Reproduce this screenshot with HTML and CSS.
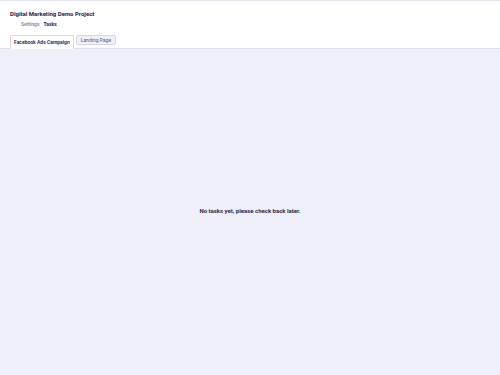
FILE: index.html
```html
<!DOCTYPE html>
<html lang="en">
<head>
  <meta charset="UTF-8">
  <title>Digital Marketing Demo Project</title>
  <link rel="stylesheet" href="styles.css">
</head>
<body>
  <header class="project-header">
    <h1 class="project-title">Digital Marketing Demo Project</h1>
    <nav class="project-nav">
      <a href="#">Settings</a>
      <a href="#" class="active">Tasks</a>
    </nav>
    <div class="tabs">
      <a href="#" class="tab active">Facebook Ads Campaign</a>
      <a href="#" class="tab">Landing Page</a>
    </div>
  </header>

  <main class="task-area">
    <p class="empty">No tasks yet, please check back later.</p>
  </main>
</body>
</html>
```

FILE: styles.css
```css
html, body {
  height: 100%;
}

body {
  margin: 0;
  font-family: Roboto, "Liberation Sans", sans-serif;
  background-color: #f0f0fa;
  color: #1e1b4b;
  display: flex;
  flex-direction: column;
}

.project-header {
  background-color: white;
  border-top: 1px solid #e4e4ef;
  border-bottom: 1px solid #dcdcea;
  padding: 9px 10px 0;
}

.project-title {
  margin: 0;
  font-size: 6px;
  font-weight: 700;
  line-height: 8px;
}

.project-nav {
  display: flex;
  gap: 4px;
  padding-left: 11px;
  margin-top: 2px;
}

.project-nav a {
  font-size: 5px;
  line-height: 8px;
  color: #7c7c95;
  text-decoration: none;
  font-weight: 500;
}

.project-nav a.active {
  color: #1e1b4b;
  font-weight: 700;
}

/* Tabs */
.tabs {
  display: flex;
  align-items: flex-start;
  gap: 2px;
  margin-top: 7px;
  margin-bottom: -1px;
}

.tab {
  font-size: 5px;
  line-height: 6px;
  padding: 1px 4px;
  border: 1px solid #d6d6e6;
  border-radius: 2px;
  background-color: #f0f0fa;
  color: #5c5c7a;
  text-decoration: none;
}

.tab.active {
  background-color: white;
  color: #1e1b4b;
  font-weight: 600;
  padding: 3px 3px 3px;
  border-bottom-color: white;
  border-radius: 2px 2px 0 0;
}

.task-area {
  flex: 1;
  display: flex;
  align-items: center;
  justify-content: center;
  padding-bottom: 3px;
}

.empty {
  margin: 0;
  font-size: 6px;
  font-weight: 700;
  color: #2a2850;
}
```
